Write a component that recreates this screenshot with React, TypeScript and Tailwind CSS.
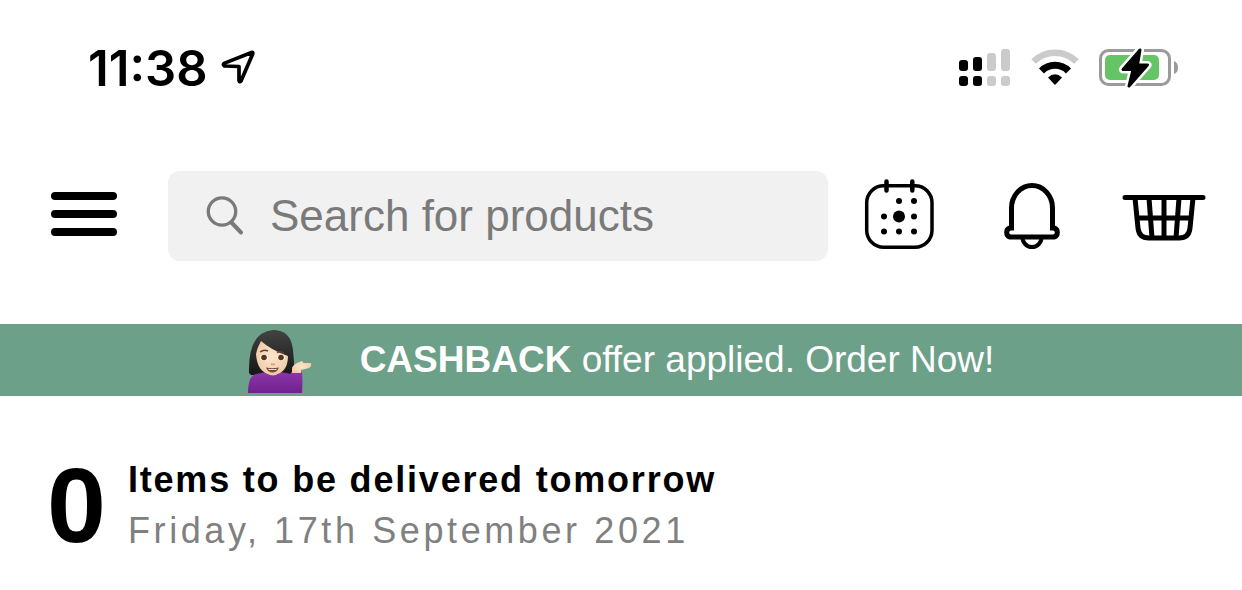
import React from 'react';

const StatusBar: React.FC = () => {
  return (
    <div className="flex items-center justify-between pl-[88px] pr-[63px] h-[136px]">
      <div className="flex items-center gap-3">
        <span className="font-['Inter',sans-serif] pt-0.5 text-[49px] font-semibold">11:38</span>
        <svg width="36" height="36" viewBox="0 0 36 36" fill="none" aria-hidden="true">
          <path
            d="M4 13.400 31.500 2.500Q33.400 2 32.700 4L21 31Q19.500 32.500 19 30.500V16.500L4.500 16Q2.500 14.500 4 13.400Z"
            stroke="#000"
            strokeWidth="3.700"
            strokeLinejoin="round"
          />
        </svg>
      </div>
      <div className="flex items-center gap-5">
        <svg width="52" height="40" viewBox="0 0 52 40" aria-hidden="true">
          <rect x="0" y="12" width="9" height="11" rx="3" />
          <rect x="14" y="9" width="9" height="14" rx="3" />
          <rect x="28" y="5" width="9" height="18" rx="3" fill="#cbcbcb" />
          <rect x="42" y="1" width="9" height="22" rx="3" fill="#cbcbcb" />
          <rect x="0" y="28" width="9" height="10" rx="3" />
          <rect x="14" y="28" width="9" height="10" rx="3" />
          <rect x="28" y="28" width="9" height="10" rx="3" fill="#cbcbcb" />
          <rect x="42" y="28" width="9" height="10" rx="3" fill="#cbcbcb" />
        </svg>
        <svg width="48" height="40" viewBox="0 0 48 40" fill="none" aria-hidden="true">
          <path d="M2.500 13.500a30.500 30.500 0 0 1 43 0" stroke="#cbcbcb" strokeWidth="6.500" />
          <path d="M10.500 23a19 19 0 0 1 27 0" stroke="#000" strokeWidth="7" />
          <path d="M17 29.500q7-6.500 14 0l-6.200 6.800q-.8.8-1.600 0z" fill="#000" />
        </svg>
        <svg width="80" height="40" viewBox="0 0 80 40" aria-hidden="true">
          <rect x="1.500" y="2.500" width="69" height="34" rx="8" fill="#fff" stroke="#9a9a9a" strokeWidth="3" />
          <rect x="6" y="7" width="54" height="25" rx="5" fill="#65c466" />
          <path d="M75 13q4 1.500 4 6.500t-4 6.500z" fill="#9a9a9a" />
          <path
            d="M41 2 24 21.500H34L30 38 48.500 17H38.500Z"
            fill="#000"
            stroke="#fff"
            strokeWidth="8"
            strokeLinejoin="round"
            paintOrder="stroke"
          />
          <path d="M41 2 24 21.500H34L30 38 48.500 17H38.500Z" stroke="#000" strokeWidth="3" strokeLinejoin="round" />
        </svg>
      </div>
    </div>
  );
};

const CalendarIcon: React.FC = () => (
  <svg width="72" height="76" viewBox="0 0 72 76" aria-hidden="true">
    <rect x="2.700" y="7.700" width="65.300" height="61.500" rx="17" fill="none" stroke="#000" strokeWidth="3.500" />
    <path d="M22.500 3.500v9M48.300 3.500v9" stroke="#000" strokeWidth="4.500" strokeLinecap="round" />
    <circle cx="35" cy="23" r="3" />
    <circle cx="50" cy="23" r="3" />
    <circle cx="20" cy="38.500" r="3" />
    <circle cx="35" cy="38.500" r="6" />
    <circle cx="50" cy="38.500" r="3" />
    <circle cx="20" cy="53.500" r="3" />
    <circle cx="35" cy="53.500" r="3" />
    <circle cx="50" cy="53.500" r="3" />
  </svg>
);

const BellIcon: React.FC = () => (
  <svg width="62" height="68" viewBox="0 0 62 68" fill="none" stroke="#000" strokeWidth="5" aria-hidden="true">
    <path d="M10.500 46V26a20.500 22.500 0 0 1 41 0V46h1.500a4.700 4.700 0 0 1 0 9h-44a4.700 4.700 0 0 1 0-9z" />
    <path d="M21.500 55.500a9.500 9.500 0 0 0 19 0" strokeWidth="4" />
  </svg>
);

const BasketIcon: React.FC = () => (
  <svg width="84" height="52" viewBox="0 -5 84 52" fill="none" stroke="#000" strokeWidth="5" aria-hidden="true">
    <path d="M3 2.500h78" strokeLinecap="round" />
    <path d="M13 3l3 30q1 10 11 10h30q10 0 11-10l3-30M27 3l3 40M42 3v40M57 3l-3 40M15 23h54" />
  </svg>
);

const Header: React.FC = () => {
  return (
    <header className="flex items-center pl-[51px] pr-9 pt-[35px]">
      <button type="button" aria-label="Menu" className="flex w-[66px] flex-col gap-[10px] pb-1">
        <span className="h-2 w-full rounded-full bg-black" />
        <span className="h-2 w-full rounded-full bg-black" />
        <span className="h-2 w-full rounded-full bg-black" />
      </button>
      <label className="ml-[51px] flex h-[90px] min-w-0 flex-1 items-center gap-6 rounded-xl bg-[#f1f1f1] pl-[38px]">
        <svg width="40" height="40" viewBox="0 0 40 40" fill="none" stroke="#7a7a7a" aria-hidden="true">
          <circle cx="16" cy="15.500" r="13.700" strokeWidth="3.300" />
          <path d="M25.500 26.500 35 36.500" strokeWidth="4" strokeLinecap="round" />
        </svg>
        <input
          type="text"
          aria-label="Search for products"
          placeholder="Search for products"
          className="min-w-0 flex-1 bg-transparent text-[44px] outline-none placeholder:text-[#7a7a7a]"
        />
      </label>
      <button type="button" aria-label="Delivery calendar" className="ml-9">
        <CalendarIcon />
      </button>
      <button type="button" aria-label="Notifications" className="ml-[65px]">
        <BellIcon />
      </button>
      <button type="button" aria-label="Basket" className="ml-[59px]">
        <BasketIcon />
      </button>
    </header>
  );
};

const TippingHandWoman: React.FC = () => (
  <svg width="66" height="64" viewBox="0 0 66 64" aria-hidden="true">
    <defs>
      <linearGradient id="hair" x1="0" y1="0" x2="0" y2="1">
        <stop offset="0" stopColor="#434343" />
        <stop offset="1" stopColor="#161616" />
      </linearGradient>
      <linearGradient id="top" x1="0" y1="0" x2="0" y2="1">
        <stop offset="0" stopColor="#8d35a8" />
        <stop offset="1" stopColor="#6f2190" />
      </linearGradient>
      <radialGradient id="skin" cx="0.500" cy="0.450" r="0.600">
        <stop offset="0" stopColor="#fde6cd" />
        <stop offset="1" stopColor="#efc8a6" />
      </radialGradient>
    </defs>
    <path d="M1 44Q0 3 25 1q18 0 20 20 1 12 2 25l-44 0z" fill="url(#hair)" />
    <path d="M18 38h14v10q-7 4-14 0z" fill="#e6b991" />
    <path d="M0 64q0-17 8-19l10-2q7 7 14 0l12 2v19z" fill="url(#top)" />
    <path d="M43 64V43h11q1 10 0 21z" fill="url(#top)" />
    <path d="M44 44q-1-8 5-10l5-2q2 1 1 2l8 0q1 3-2 5l-8 2v3z" fill="url(#skin)" />
    <path d="M8 25q1-6 5-13 10 9 27 15 0 18-16 19Q9 44 8 25z" fill="url(#skin)" />
    <path d="M12 23q4-3 8-1M29 23.500q4-2 7 1" stroke="#5d4433" strokeWidth="1.500" fill="none" />
    <ellipse cx="16" cy="28.500" rx="4" ry="3" fill="#fff" />
    <ellipse cx="33" cy="28.500" rx="4" ry="3" fill="#fff" />
    <circle cx="16" cy="28.500" r="2.800" fill="#573719" />
    <circle cx="33" cy="28.500" r="2.800" fill="#573719" />
    <path d="M23 35q2 1 4 0" stroke="#d59c77" strokeWidth="1.500" fill="none" />
    <path d="M18 38.500q6 1.500 13 0-2 5-6.500 5t-6.500-5z" fill="#7a4636" />
    <path d="M20 39.700q5 1 9 0l-1 1.200h-7z" fill="#fff" />
  </svg>
);

const CashbackBanner: React.FC = () => {
  return (
    <div className="mt-[63px] flex h-[72px] items-center justify-center gap-[46px] bg-[#6ca089] pt-0.5 text-white">
      <TippingHandWoman />
      <p className="text-[37px] leading-[40px] pb-0.5">
        <strong className="font-bold">CASHBACK</strong> offer applied. Order Now!
      </p>
    </div>
  );
};

const DeliverySummary: React.FC = () => {
  return (
    <section className="flex items-center gap-[22px] pl-[47px] pt-[57px]">
      <span className="text-[106px] leading-[104px] font-bold">0</span>
      <div>
        <h2 className="text-4xl leading-[51px] font-bold tracking-wider">Items to be delivered tomorrow</h2>
        <p className="text-4xl leading-[51px] tracking-widest text-[#808080]">Friday, 17th September 2021</p>
      </div>
    </section>
  );
};

const App: React.FC = () => {
  return (
    <main className="bg-white font-['Liberation_Sans',Arial,sans-serif] text-black">
      <StatusBar />
      <Header />
      <CashbackBanner />
      <DeliverySummary />
    </main>
  );
};

export default App;
